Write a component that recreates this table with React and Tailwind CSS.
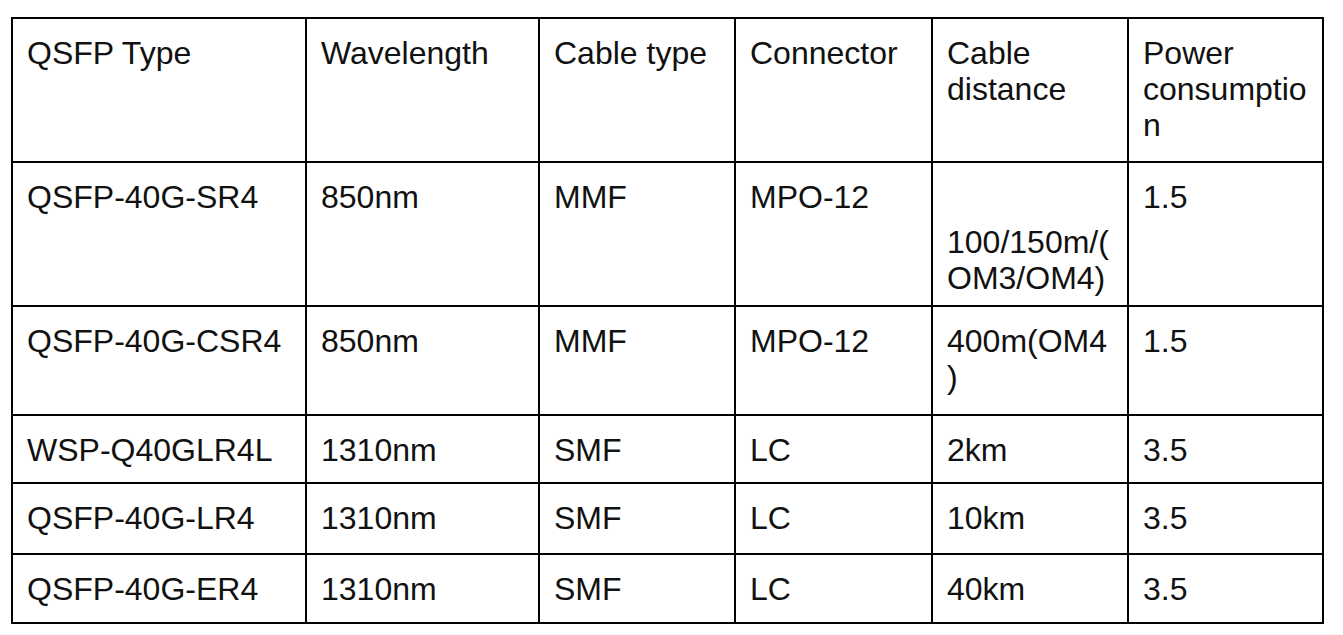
const header = ['QSFP Type', 'Wavelength', 'Cable type', 'Connector', 'Cable distance', 'Power consumption']

const rows = [
  { h: 'h-[144px]', cells: ['QSFP-40G-SR4', '850nm', 'MMF', 'MPO-12', 'split', '1.5'] },
  { h: 'h-[109px]', cells: ['QSFP-40G-CSR4', '850nm', 'MMF', 'MPO-12', '400m(OM4)', '1.5'] },
  { h: 'h-[68px]', cells: ['WSP-Q40GLR4L', '1310nm', 'SMF', 'LC', '2km', '3.5'] },
  { h: 'h-[71px]', cells: ['QSFP-40G-LR4', '1310nm', 'SMF', 'LC', '10km', '3.5'] },
  { h: 'h-[69px]', cells: ['QSFP-40G-ER4', '1310nm', 'SMF', 'LC', '40km', '3.5'] },
]

const cell = 'border-2 border-black align-top pt-[16px] px-[14px] break-words'

export default function App() {
  return (
    <div className="min-h-screen bg-white pt-[17px] pl-[11px] text-[#111] text-[32px] leading-[36px] font-['Liberation_Sans',Arial,sans-serif]">
      <table className="table-fixed border-collapse w-[1313px]">
        <colgroup>
          <col className="w-[294px]" />
          <col className="w-[233px]" />
          <col className="w-[196px]" />
          <col className="w-[197px]" />
          <col className="w-[196px]" />
          <col className="w-[195px]" />
        </colgroup>
        <tbody>
          <tr>
            {header.map((t) => (
              <td key={t} className={`${cell} h-[144px]`}>
                {t}
              </td>
            ))}
          </tr>
          {rows.map((r) => (
            <tr key={r.cells[0]}>
              {r.cells.map((t, i) => (
                <td key={i} className={`${cell} ${r.h}`}>
                  {t === 'split' ? (
                    <>
                      <div className="h-[45px]" />
                      100/150m/(
                      <br />
                      OM3/OM4)
                    </>
                  ) : (
                    t
                  )}
                </td>
              ))}
            </tr>
          ))}
        </tbody>
      </table>
    </div>
  )
}
